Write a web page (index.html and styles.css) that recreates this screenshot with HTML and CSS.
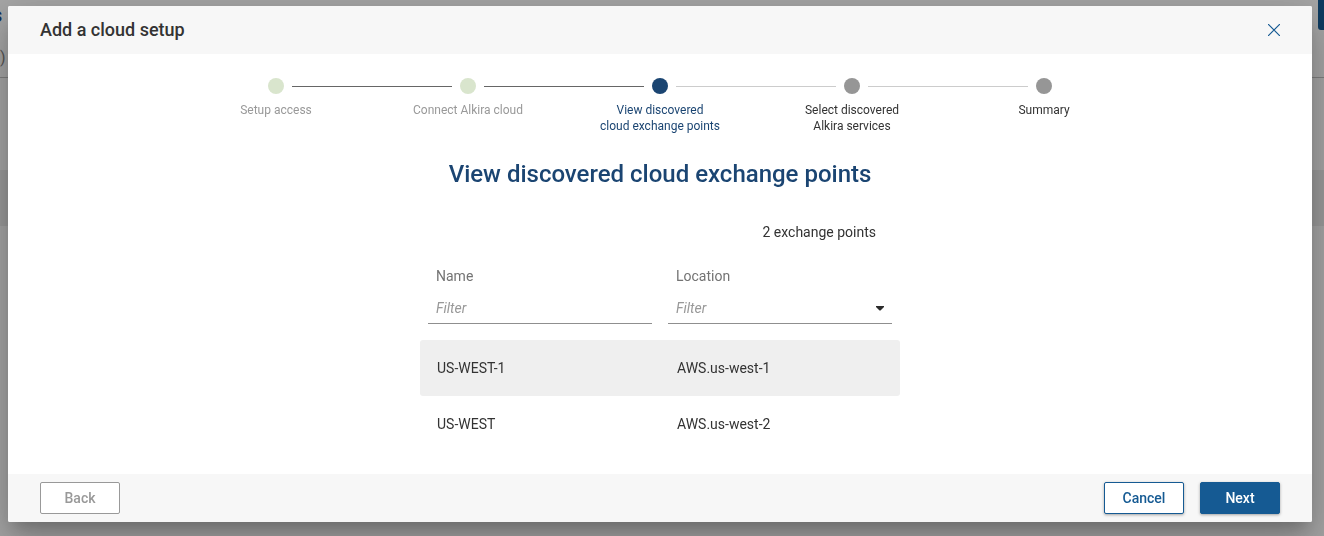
FILE: index.html
```html
<!DOCTYPE html>
<html lang="en">
<head>
    <meta charset="UTF-8">
    <meta name="viewport" content="width=device-width, initial-scale=1.0">
    <title>Add a cloud setup</title>
    <link rel="stylesheet" href="styles.css">
</head>
<body>
    <!-- Page behind the dialog -->
    <div class="page" aria-hidden="true">
        <div class="page-header">
            <span class="page-title">s</span>
            <span class="page-action"></span>
        </div>
        <div class="page-tabs">)</div>
        <div class="page-row"></div>
    </div>

    <div class="overlay">
        <div class="dialog" role="dialog" aria-labelledby="dialogTitle">
            <header class="dialog-header">
                <h1 id="dialogTitle">Add a cloud setup</h1>
                <button class="close" type="button" aria-label="Close">
                    <svg width="12" height="12" viewBox="0 0 12 12" fill="none" stroke="currentColor" stroke-width="1.2">
                        <path d="M0 0L12 12M12 0L0 12"/>
                    </svg>
                </button>
            </header>

            <main class="dialog-body">
                <ol class="stepper">
                    <li class="step done">
                        <div class="track"><span class="dot"></span></div>
                        Setup access
                    </li>
                    <li class="step done">
                        <div class="track"><span class="dot"></span></div>
                        Connect Alkira cloud
                    </li>
                    <li class="step current" aria-current="step">
                        <div class="track"><span class="dot"></span></div>
                        View discovered<br>cloud exchange points
                    </li>
                    <li class="step">
                        <div class="track"><span class="dot"></span></div>
                        Select discovered<br>Alkira services
                    </li>
                    <li class="step">
                        <div class="track"><span class="dot"></span></div>
                        Summary
                    </li>
                </ol>

                <h2>View discovered cloud exchange points</h2>

                <div class="points">
                    <p class="count">2 exchange points</p>
                    <table>
                        <thead>
                            <tr>
                                <th>
                                    <label for="nameFilter">Name</label>
                                    <div class="filter">
                                        <input type="text" id="nameFilter" placeholder="Filter">
                                    </div>
                                </th>
                                <th>
                                    <label for="locationFilter">Location</label>
                                    <div class="filter">
                                        <select id="locationFilter">
                                            <option value="">Filter</option>
                                            <option>AWS.us-west-1</option>
                                            <option>AWS.us-west-2</option>
                                        </select>
                                        <svg class="arrow" width="8" height="5" viewBox="0 0 8 5"><path d="M0 0H8V1L4.5 4.5H3.5L0 1Z" fill="#2b2b2b"/></svg>
                                    </div>
                                </th>
                            </tr>
                        </thead>
                        <tbody>
                            <tr>
                                <td>US-WEST-1</td>
                                <td>AWS.us-west-1</td>
                            </tr>
                            <tr>
                                <td>US-WEST</td>
                                <td>AWS.us-west-2</td>
                            </tr>
                        </tbody>
                    </table>
                </div>
            </main>

            <footer class="dialog-footer">
                <button class="btn" type="button" disabled>Back</button>
                <div class="actions">
                    <button class="btn btn-outline" type="button">Cancel</button>
                    <button class="btn btn-primary" type="button">Next</button>
                </div>
            </footer>
        </div>
    </div>
</body>
</html>
```
FILE: styles.css
```css
* {
    box-sizing: border-box;
}

body {
    margin: 0;
    font-family: Roboto, "Liberation Sans", sans-serif;
    font-size: 14px;
    line-height: 16px;
    color: #333333;
    background-color: #a6a6a6;
    overflow: hidden;
}

h1, h2, p, ol {
    margin: 0;
    padding: 0;
}

button, input, select {
    font: inherit;
}

/* Page behind the dialog */
.page-header {
    display: flex;
    justify-content: space-between;
    height: 30px;
}

.page-title {
    margin-left: -8px;
    font-size: 20px;
    font-weight: 500;
    line-height: 30px;
    color: #12305a;
}

.page-action {
    width: 6px;
    background-color: #0d3b61;
    border-radius: 0 0 0 3px;
}

.page-tabs {
    height: 48px;
    padding-top: 18px;
    font-size: 16px;
    line-height: 20px;
    color: #555555;
    border-bottom: 1px solid #7f7f7f;
}

.page-row {
    height: 56px;
    margin-top: 92px;
    background-color: #9b9b9b;
}

/* Dialog */
.overlay {
    position: fixed;
    inset: 0;
    display: flex;
    padding: 6px 12px 14px 8px;
}

.dialog {
    flex: 1;
    display: flex;
    flex-direction: column;
    background-color: #ffffff;
    border-radius: 2px;
    overflow: hidden;
    box-shadow: 0 11px 15px -7px rgba(0, 0, 0, 0.2), 0 24px 38px 3px rgba(0, 0, 0, 0.14), 0 9px 46px 8px rgba(0, 0, 0, 0.12);
}

.dialog-header, .dialog-footer {
    display: flex;
    align-items: center;
    justify-content: space-between;
    height: 48px;
    padding: 0 32px;
    background-color: #f7f7f7;
}

.dialog-header h1 {
    font-size: 18px;
    font-weight: 500;
    line-height: 24px;
}

.close {
    display: flex;
    padding: 6px;
    margin-right: -6px;
    color: #155a93;
    background: none;
    border: none;
    cursor: pointer;
}

.dialog-body {
    flex: 1;
    padding-top: 24px;
}

/* Stepper */
.stepper {
    display: grid;
    grid-template-columns: repeat(5, 1fr);
    max-width: 960px;
    margin: 0 auto;
    list-style: none;
}

.step {
    font-size: 12px;
    text-align: center;
}

.track {
    display: flex;
    align-items: center;
    gap: 8px;
    margin-bottom: 8px;
    color: #cccccc;
}

/* Half of the line on each side of the dot */
.track::before, .track::after {
    content: "";
    flex: 1;
    height: 1px;
    background-color: currentColor;
}

.step:first-child .track::before, .step:last-child .track::after {
    background: none;
}

.done .track, .current .track::before {
    color: #666666;
}

.dot {
    width: 16px;
    height: 16px;
    border-radius: 50%;
    background-color: #969696;
}

.done {
    color: #999999;
}

.done .dot {
    background-color: #d9e5cd;
}

.current {
    color: #1b4572;
}

.current .dot {
    background-color: #1b4572;
}

h2 {
    margin-top: 24px;
    font-size: 24px;
    font-weight: 500;
    line-height: 32px;
    text-align: center;
    color: #1b4572;
}

/* Exchange points */
.points {
    max-width: 480px;
    margin: 34px auto 0;
}

.count {
    padding-right: 24px;
    text-align: right;
}

table {
    width: 100%;
    margin-top: 28px;
    table-layout: fixed;
    border-collapse: collapse;
}

th {
    padding: 0 8px 16px;
    font-weight: 400;
    text-align: left;
}

th label {
    display: block;
    padding: 0 8px;
    color: #737373;
}

.filter {
    position: relative;
    margin-top: 8px;
    border-bottom: 1px solid #8f8f8f;
}

.filter input, .filter select {
    display: block;
    width: 100%;
    height: 31px;
    padding: 0 8px;
    font-style: italic;
    color: #999999;
    background: none;
    border: none;
    border-radius: 0;
    outline: none;
    appearance: none;
}

.filter input::placeholder {
    color: #999999;
}

.arrow {
    position: absolute;
    top: 14px;
    right: 8px;
    pointer-events: none;
}

td {
    height: 56px;
    padding: 0 17px;
}

tbody tr:nth-child(odd) td {
    background-color: #efefef;
}

td:first-child {
    border-radius: 3px 0 0 3px;
}

td:last-child {
    border-radius: 0 3px 3px 0;
}

/* Buttons */
.actions {
    display: flex;
    gap: 16px;
}

.btn {
    width: 80px;
    height: 32px;
    padding: 0;
    font-weight: 500;
    color: #999999;
    background-color: #ffffff;
    border: 1px solid #999999;
    border-radius: 2px;
}

.btn-outline, .btn-primary {
    color: #155a93;
    border-color: #155a93;
    box-shadow: 0 1px 3px rgba(0, 0, 0, 0.35);
    cursor: pointer;
}

.btn-primary {
    color: #ffffff;
    background-color: #155a93;
}
```
